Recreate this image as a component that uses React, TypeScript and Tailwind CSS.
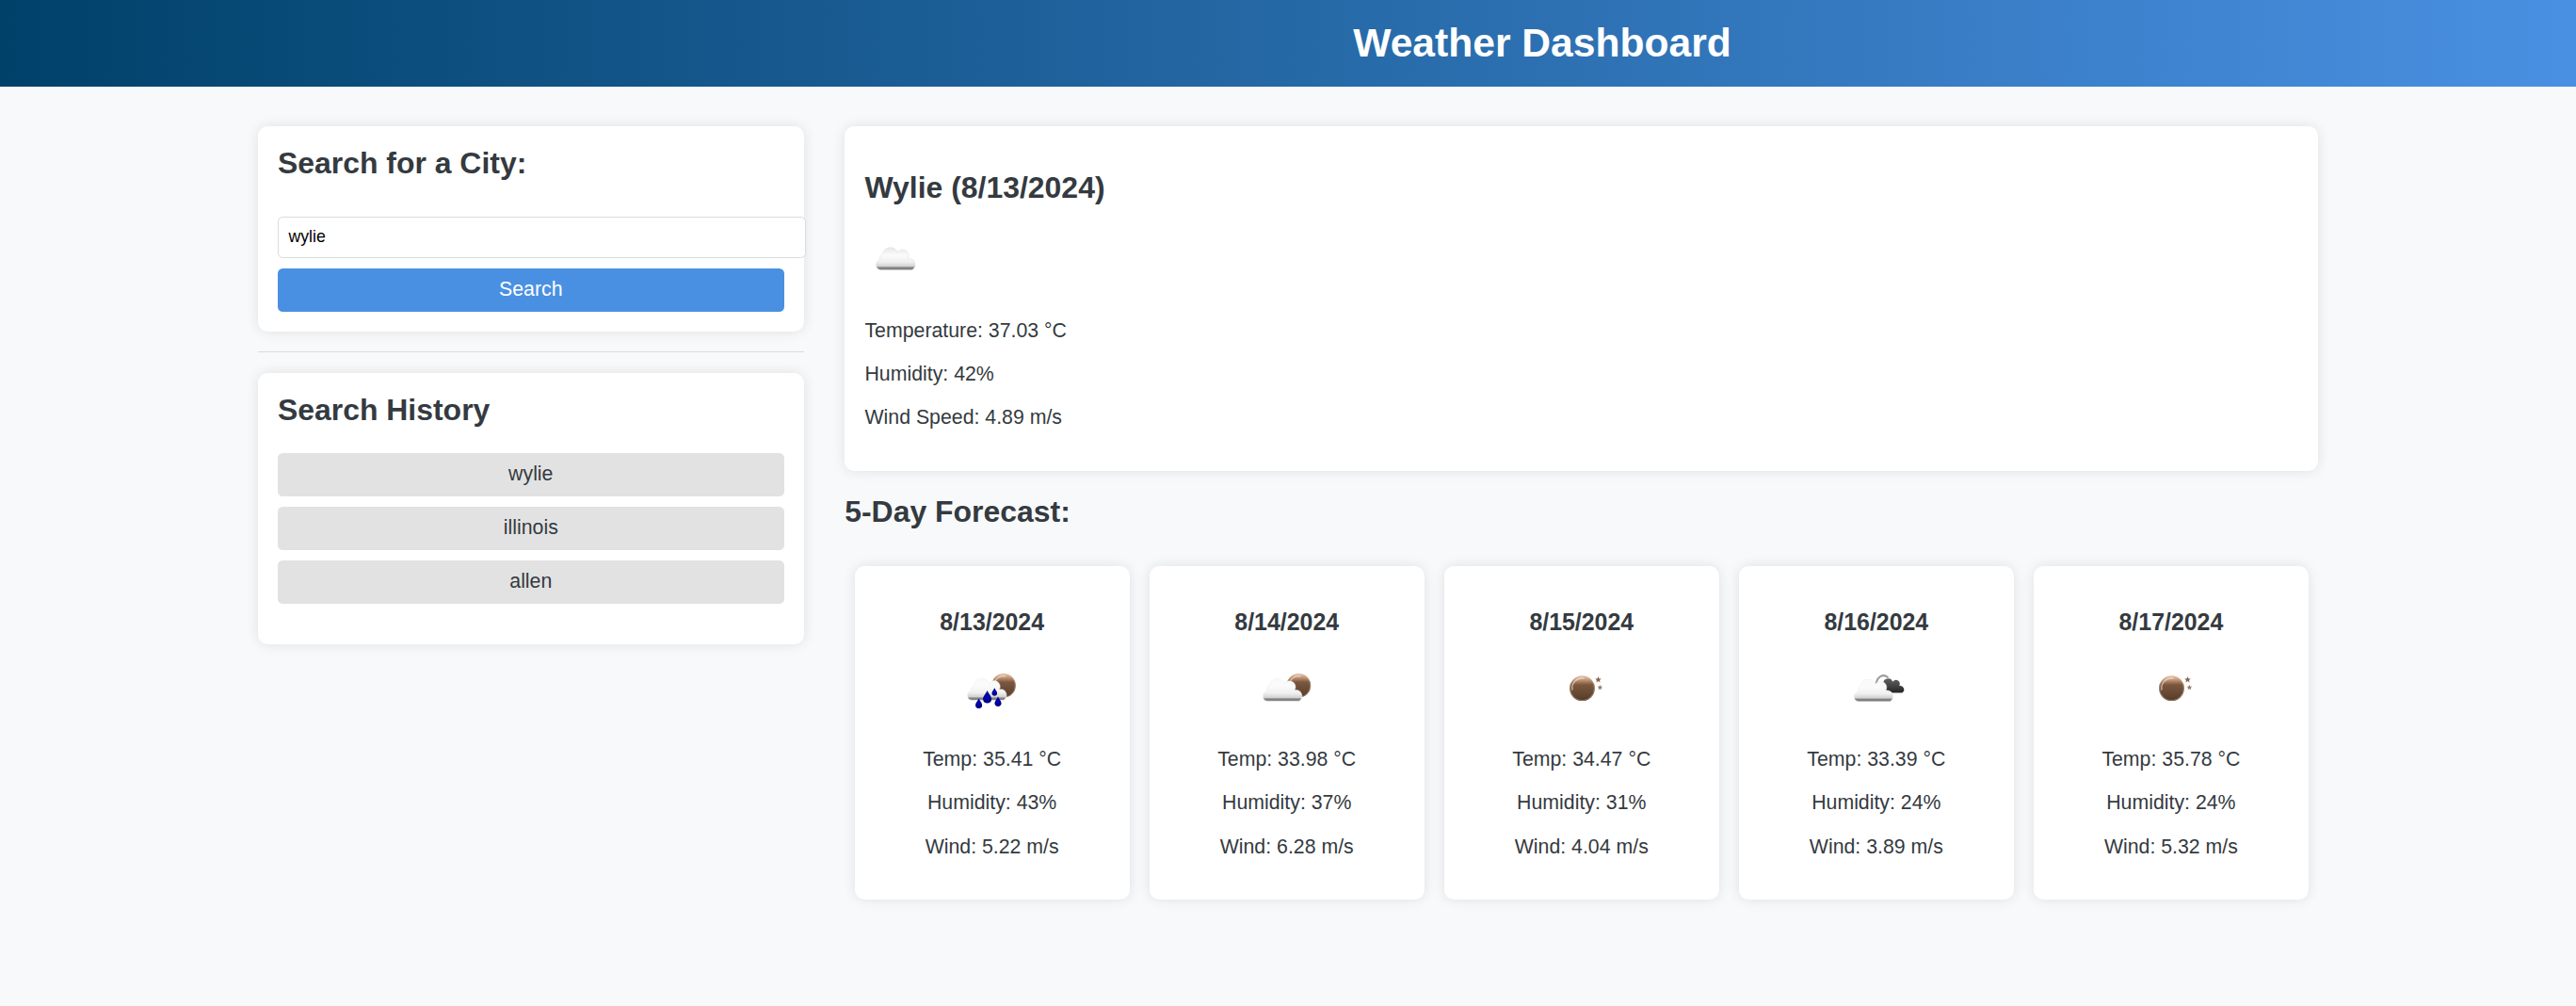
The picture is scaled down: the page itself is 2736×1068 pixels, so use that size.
import React from "react";

type IconKind = "cloud" | "rain" | "partly" | "clear" | "broken";

const CLOUD =
  "M5.2 24.5A5.2 5.2 0 0 1 4.6 14.2A4.6 4.6 0 0 1 7.2 8A8.2 8.2 0 0 1 23 6.2A6.2 6.2 0 0 1 34 12.9A6.3 6.3 0 0 1 38.6 24.5Z";
const DROP = "M0 -6C1 -3 4.2 -0.5 4.2 2.4C4.2 4.8 2.3 6.4 0 6.4C-2.3 6.4 -4.2 4.8 -4.2 2.4C-4.2 -0.5 -1 -3 0 -6Z";
const STAR = "M0 -3.4L0.9 -1.1L3.3 -1.1L1.5 0.5L2.1 2.9L0 1.6L-2.1 2.9L-1.5 0.5L-3.3 -1.1L-0.9 -1.1Z";

function Moon({ id, cx, cy, r }: { id: string; cx: number; cy: number; r: number }) {
  return (
    <g>
      <circle cx={cx} cy={cy} r={r} fill={`url(#${id}-moon)`} />
      <circle cx={cx} cy={cy} r={r - 0.5} fill="none" stroke="#d9b79f" strokeOpacity="0.45" />
      <path
        d={`M${cx - r + 3} ${cy + 2}A${r - 3} ${r - 3} 0 0 1 ${cx + 2} ${cy - r + 3}`}
        fill="none"
        stroke="#f3ded0"
        strokeOpacity="0.75"
        strokeWidth="1.3"
      />
    </g>
  );
}

function WeatherIcon({ kind, id }: { kind: IconKind; id: string }) {
  return (
    <svg viewBox="0 0 66.5 66.5" className="block size-[66.5px]" aria-label={kind}>
      <defs>
        <linearGradient id={`${id}-cloud`} x1="0" y1="0" x2="0" y2="1">
          <stop offset="0" stopColor={kind === "cloud" ? "#e8e8e8" : "#fafafa"} />
          <stop offset="0.35" stopColor="#fbfbfb" />
          <stop offset="0.65" stopColor="#f0f0f0" />
          <stop offset="0.84" stopColor="#d2d2d2" />
          <stop offset="0.9" stopColor="#858585" />
          <stop offset="1" stopColor="#777777" />
        </linearGradient>
        <linearGradient id={`${id}-moon`} x1="0" y1="0" x2="0" y2="1">
          <stop offset="0" stopColor="#e9cdb8" />
          <stop offset="0.2" stopColor="#b98b6b" />
          <stop offset="0.36" stopColor="#7b573f" />
          <stop offset="0.8" stopColor="#604531" />
          <stop offset="1" stopColor="#513624" />
        </linearGradient>
        <linearGradient id={`${id}-dark`} x1="0" y1="0" x2="0" y2="1">
          <stop offset="0" stopColor="#606060" />
          <stop offset="0.5" stopColor="#444444" />
          <stop offset="1" stopColor="#242424" />
        </linearGradient>
        <radialGradient id={`${id}-drop`}>
          <stop offset="0" stopColor="#0000d0" />
          <stop offset="1" stopColor="#000078" />
        </radialGradient>
      </defs>
      {kind === "cloud" && (
        <path d={CLOUD} transform="translate(12.3 16.9)" fill={`url(#${id}-cloud)`} stroke="#dddddd" strokeWidth="0.5" />
      )}
      {kind === "partly" && (
        <>
          <Moon id={id} cx={46.4} cy={28.8} r={12.8} />
          <path d={CLOUD} transform="translate(8.1 20.8)" fill={`url(#${id}-cloud)`} stroke="#ececec" strokeWidth="0.5" />
        </>
      )}
      {kind === "rain" && (
        <>
          <Moon id={id} cx={46} cy={28.8} r={12.8} />
          <path d={CLOUD} transform="translate(7.3 20.6) scale(1 .97)" fill={`url(#${id}-cloud)`} stroke="#ececec" strokeWidth="0.5" />
          <path d={DROP} transform="translate(28.6 40.6) scale(1.08)" fill={`url(#${id}-drop)`} />
          <path d={DROP} transform="translate(19.6 47.6) scale(.85)" fill={`url(#${id}-drop)`} />
          <path d={DROP} transform="translate(36.3 35.4) scale(.68)" fill={`url(#${id}-drop)`} />
          <path d={DROP} transform="translate(40 45.5) scale(.85)" fill={`url(#${id}-drop)`} />
        </>
      )}
      {kind === "clear" && (
        <>
          <Moon id={id} cx={33.5} cy={31.7} r={13.4} />
          <path d={STAR} transform="translate(50.5 22.5)" fill="#83604a" />
          <path d={STAR} transform="translate(52.4 30.8) scale(.85)" fill="#9b7763" />
        </>
      )}
      {kind === "broken" && (
        <>
          <path d="M32.6 27C34 19 40.5 15.5 45.5 20.5" fill="none" stroke="#9b9b9b" strokeWidth="2" />
          <path d={CLOUD} transform="translate(35.5 20.8) scale(.64)" fill={`url(#${id}-dark)`} />
          <path d={CLOUD} transform="translate(8.9 21.2)" fill={`url(#${id}-cloud)`} stroke="#ececec" strokeWidth="0.5" />
        </>
      )}
    </svg>
  );
}

const history = ["wylie", "illinois", "allen"];

const forecast: { date: string; icon: IconKind; temp: string; humidity: string; wind: string }[] = [
  { date: "8/13/2024", icon: "rain", temp: "35.41", humidity: "43", wind: "5.22" },
  { date: "8/14/2024", icon: "partly", temp: "33.98", humidity: "37", wind: "6.28" },
  { date: "8/15/2024", icon: "clear", temp: "34.47", humidity: "31", wind: "4.04" },
  { date: "8/16/2024", icon: "broken", temp: "33.39", humidity: "24", wind: "3.89" },
  { date: "8/17/2024", icon: "clear", temp: "35.78", humidity: "24", wind: "5.32" },
];

function Card({ className, children }: { className: string; children: React.ReactNode }) {
  return (
    <section className={`rounded-[10.6px] bg-white p-[21.3px] shadow-[0_0_13.3px_rgba(0,0,0,0.1)] ${className}`}>
      {children}
    </section>
  );
}

export default function App() {
  return (
    <div className="min-h-[1068px] bg-[#f8f9fb] font-['Liberation_Sans',Arial,sans-serif] text-[21.3px] leading-[24px] text-[#343a40]">
      <header className="flex h-[92px] items-center justify-center bg-[linear-gradient(90deg,#00416a,#4a90e2)] pb-[2px] pl-[540px]">
        <h1 className="text-[42.6px] leading-[49px] font-bold text-white">Weather Dashboard</h1>
      </header>

      <main className="mx-auto flex w-4/5 items-start gap-[43.2px] pt-[41.6px]">
        <aside className="flex w-[580.4px] shrink-0 flex-col">
          <Card className="h-[218px]">
            <h2 className="pt-[0.5px] text-[31.95px] leading-[37px] font-bold">Search for a City:</h2>
            <input
              defaultValue="wylie"
              className="mt-[37.5px] block h-[44px] w-[561px] rounded-[5.3px] border border-[#d9dbdd] bg-white px-[10.6px] text-[17.7px] text-black outline-none"
            />
            <button className="mt-[11px] block h-[46px] w-full rounded-[5.3px] bg-[#4a90e2] pb-[2px] text-white">
              Search
            </button>
          </Card>
          <hr className="my-[21.5px] border-t border-[#d9dbdd]" />
          <Card className="h-[288px]">
            <h2 className="text-[31.95px] leading-[37px] font-bold">Search History</h2>
            <div className="mt-[26.7px] flex flex-col gap-[11px]">
              {history.map((city) => (
                <button key={city} className="h-[46px] rounded-[5.3px] bg-[#e2e2e2] pb-px">
                  {city}
                </button>
              ))}
            </div>
          </Card>
        </aside>

        <div className="min-w-0 flex-1">
          <Card className="h-[366px]">
            <h2 className="mt-[26.2px] text-[31.95px] leading-[37px] font-bold">Wylie (8/13/2024)</h2>
            <div className="mt-[26.6px]">
              <WeatherIcon kind="cloud" id="now" />
            </div>
            <div className="mt-[28px] flex flex-col gap-[22px]">
              <p>Temperature: 37.03 °C</p>
              <p>Humidity: 42%</p>
              <p>Wind Speed: 4.89 m/s</p>
            </div>
          </Card>

          <h2 className="mt-[25.8px] text-[31.95px] leading-[37px] font-bold">5-Day Forecast:</h2>
          <div className="mt-[38.2px] grid grid-cols-5 gap-[21.3px] px-[10.6px]">
            {forecast.map((day, i) => (
              <Card key={day.date} className="flex h-[354px] flex-col items-center">
                <h3 className="mt-[24.4px] text-[24.9px] leading-[28px] font-bold">{day.date}</h3>
                <div className="mt-[24.4px]">
                  <WeatherIcon kind={day.icon} id={`day${i}`} />
                </div>
                <div className="mt-[28.6px] flex flex-col items-center gap-[22.4px]">
                  <p>Temp: {day.temp} °C</p>
                  <p>Humidity: {day.humidity}%</p>
                  <p>Wind: {day.wind} m/s</p>
                </div>
              </Card>
            ))}
          </div>
        </div>
      </main>
    </div>
  );
}
